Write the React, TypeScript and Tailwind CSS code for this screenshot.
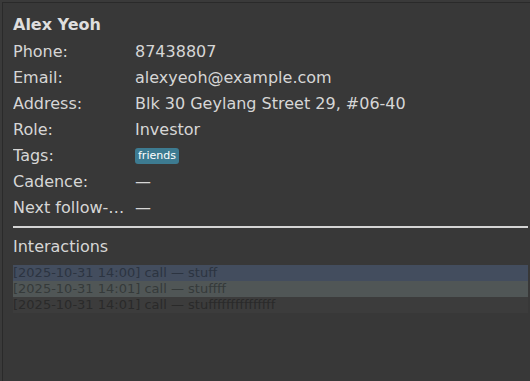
const fields = [
  { label: "Phone:", value: "87438807" },
  { label: "Email:", value: "alexyeoh@example.com" },
  { label: "Address:", value: "Blk 30 Geylang Street 29, #06-40" },
  { label: "Role:", value: "Investor" },
  { label: "Tags:", value: "" },
  { label: "Cadence:", value: "—" },
  { label: "Next follow-up:", value: "—" },
];

const interactions = [
  { text: "[2025-10-31 14:00] call — stuff", row: "bg-[#434d5e] text-[#2c3441]" },
  { text: "[2025-10-31 14:01] call — stuffff", row: "bg-[#505656] text-[#353a3a]" },
  { text: "[2025-10-31 14:01] call — stufffffffffffffff", row: "bg-[#3c3c3c] text-[#2a2a2a]" },
];

export default function App() {
  return (
    <div
      className="w-[530px] h-[381px] bg-[#3a3a3a] pl-[2px] pt-[2px] overflow-hidden"
      style={{ fontFamily: '"DejaVu Sans", sans-serif' }}
    >
      <div className="h-full border-l border-t border-[#2a2a2a] bg-[#383838] pl-[10px] pr-[2px] pt-[8px]">
        <div className="text-[16px] font-bold leading-[28px] text-[#dedede]">Alex Yeoh</div>

        {fields.map((f) => (
          <div key={f.label} className="flex items-center h-[26px] text-[16px] text-[#d6d6d6]">
            <div className="w-[122px] truncate pr-1">{f.label}</div>
            {f.label === "Tags:" ? (
              <span className="rounded-[3px] bg-[#3d7b91] px-[3px] text-[11px] leading-[16px] text-white">
                friends
              </span>
            ) : (
              <div>{f.value}</div>
            )}
          </div>
        ))}

        <div className="mt-[5px] h-[2px] bg-[#d4d4d4]" />

        <div className="mt-[6px] text-[16px] leading-[26px] text-[#d6d6d6]">Interactions</div>

        <div className="mt-[5px] bg-[#3c3c3c]">
          {interactions.map((it, i) => (
            <div key={i} className={`h-[16px] text-[13px] leading-[16px] whitespace-nowrap ${it.row}`}>
              {it.text}
            </div>
          ))}
        </div>
      </div>
    </div>
  );
}
